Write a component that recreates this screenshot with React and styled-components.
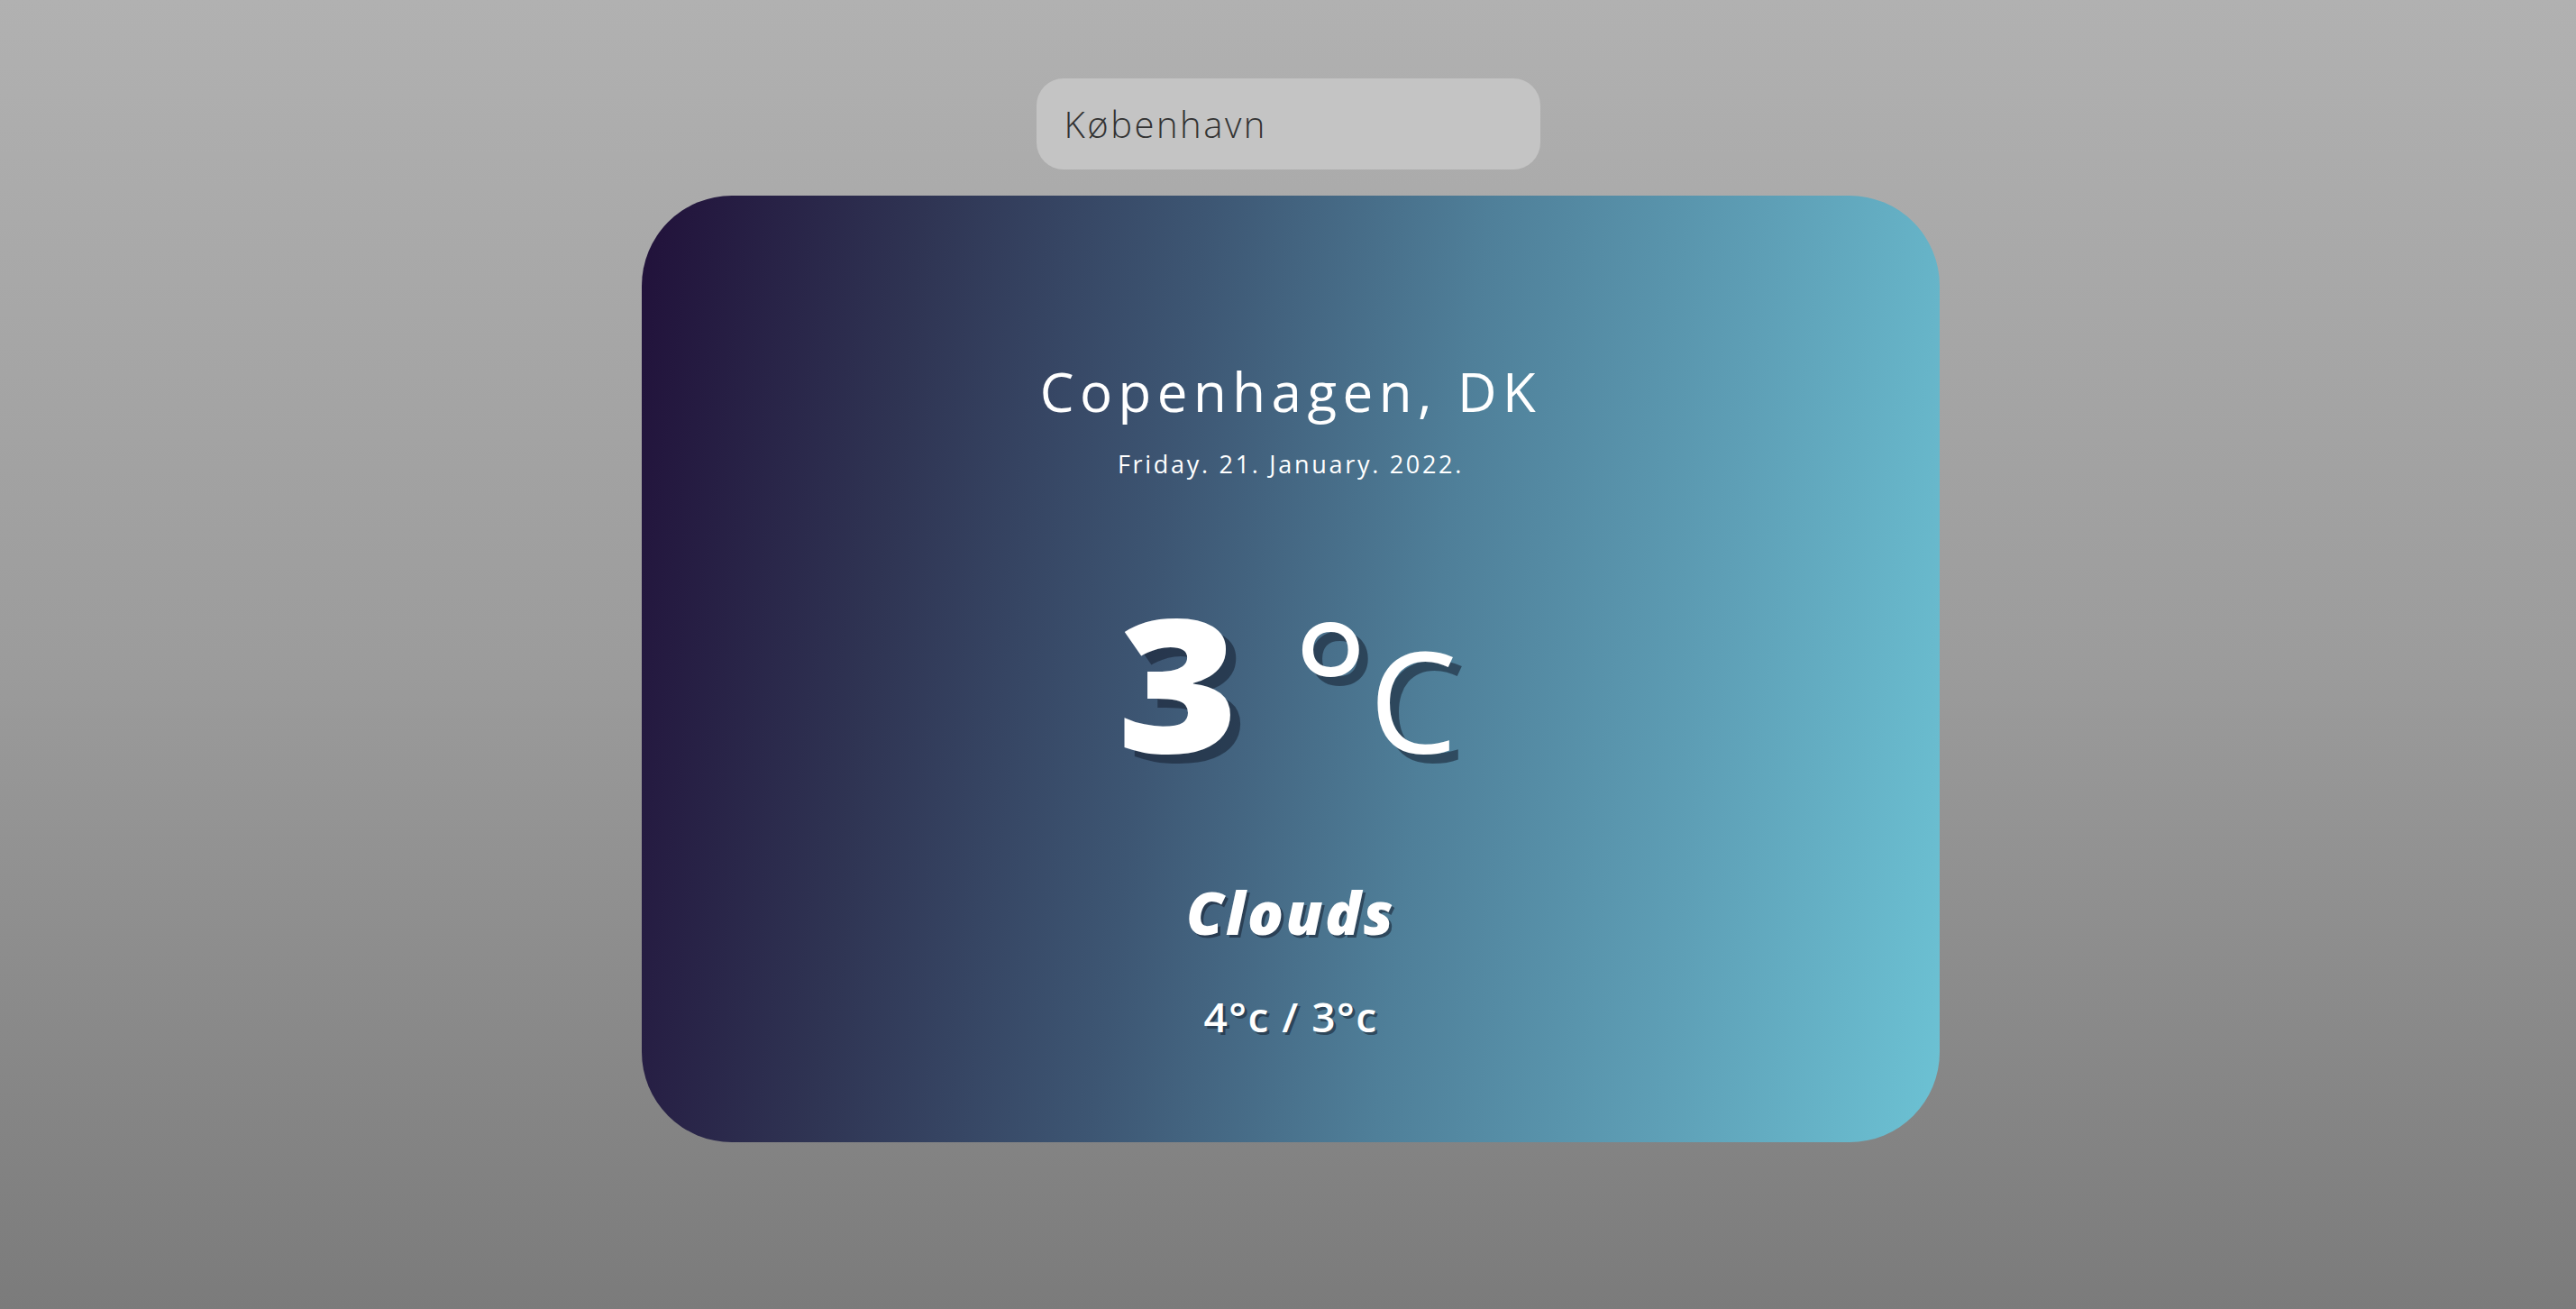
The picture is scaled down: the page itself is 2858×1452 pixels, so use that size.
import React, { useState } from "react";
import styled, { createGlobalStyle } from "styled-components";

const GlobalStyle = createGlobalStyle`
  * { box-sizing: border-box; }
  html, body { margin: 0; padding: 0; }
  body {
    font-family: "Open Sans", "Liberation Sans", sans-serif;
    background: linear-gradient(180deg, #b1b1b1 0%, #9c9c9c 50%, #7b7b7b 100%);
    min-height: 100vh;
  }
`;

const Page = styled.main`
  min-height: 100vh;
  display: flex;
  flex-direction: column;
  align-items: center;
  padding-top: 87px;
`;

const SearchInput = styled.input`
  width: 559px;
  height: 101px;
  border: none;
  outline: none;
  border-radius: 30px;
  background: #c4c4c4;
  padding: 0 31px;
  font-family: inherit;
  font-size: 40px;
  font-weight: 300;
  letter-spacing: 2.5px;
  color: #333;
`;

const Card = styled.section`
  margin-top: 29px;
  margin-left: 6px;
  width: 1440px;
  height: 1050px;
  border-radius: 100px;
  background: linear-gradient(97deg, #21113a 0%, #2f3453 20%, #3d5673 40%, #4f7f99 60%, #5e9fb6 80%, #6cc2d4 100%);
  display: flex;
  flex-direction: column;
  align-items: center;
  color: #fff;
  padding-top: 187px;
`;

const City = styled.h1`
  margin: 0;
  font-size: 60px;
  font-weight: 500;
  line-height: 1;
  letter-spacing: 6.5px;
`;

const DateLine = styled.p`
  margin: 37px 0 0;
  font-size: 27px;
  font-weight: 400;
  line-height: 1;
  letter-spacing: 2.7px;
`;

const Temp = styled.div`
  margin-top: 125px;
  display: flex;
  align-items: baseline;
  line-height: 1;
  text-shadow: 10px 10px 0 rgba(20, 30, 45, 0.55);
`;

const Degrees = styled.span`
  font-size: 205px;
  font-weight: 800;
  transform: scaleX(1.12);
`;

const Unit = styled.span`
  margin-left: ${(p) => p.$gap || 0}px;
  font-size: ${(p) => p.$size}px;
  font-weight: 500;
`;

const Condition = styled.h2`
  margin: 120px 0 0;
  font-size: 66px;
  font-weight: 800;
  font-style: italic;
  line-height: 1;
  letter-spacing: 2.5px;
  text-shadow: 3px 3px 0 rgba(20, 30, 45, 0.55);
`;

const Range = styled.p`
  margin: 60px 0 0;
  font-size: 46px;
  font-weight: 600;
  line-height: 1;
  letter-spacing: 1.5px;
  text-shadow: 3px 3px 0 rgba(20, 30, 45, 0.55);
`;

export default function App() {
  const [query, setQuery] = useState("København");
  return (
    <>
      <GlobalStyle />
      <Page>
        <SearchInput value={query} onChange={(e) => setQuery(e.target.value)} />
        <Card>
          <City>Copenhagen, DK</City>
          <DateLine>Friday. 21. January. 2022.</DateLine>
          <Temp>
            <Degrees>3</Degrees>
            <Unit $gap={66} $size={200}>°</Unit>
            <Unit $size={155}>C</Unit>
          </Temp>
          <Condition>Clouds</Condition>
          <Range>4°c / 3°c</Range>
        </Card>
      </Page>
    </>
  );
}
